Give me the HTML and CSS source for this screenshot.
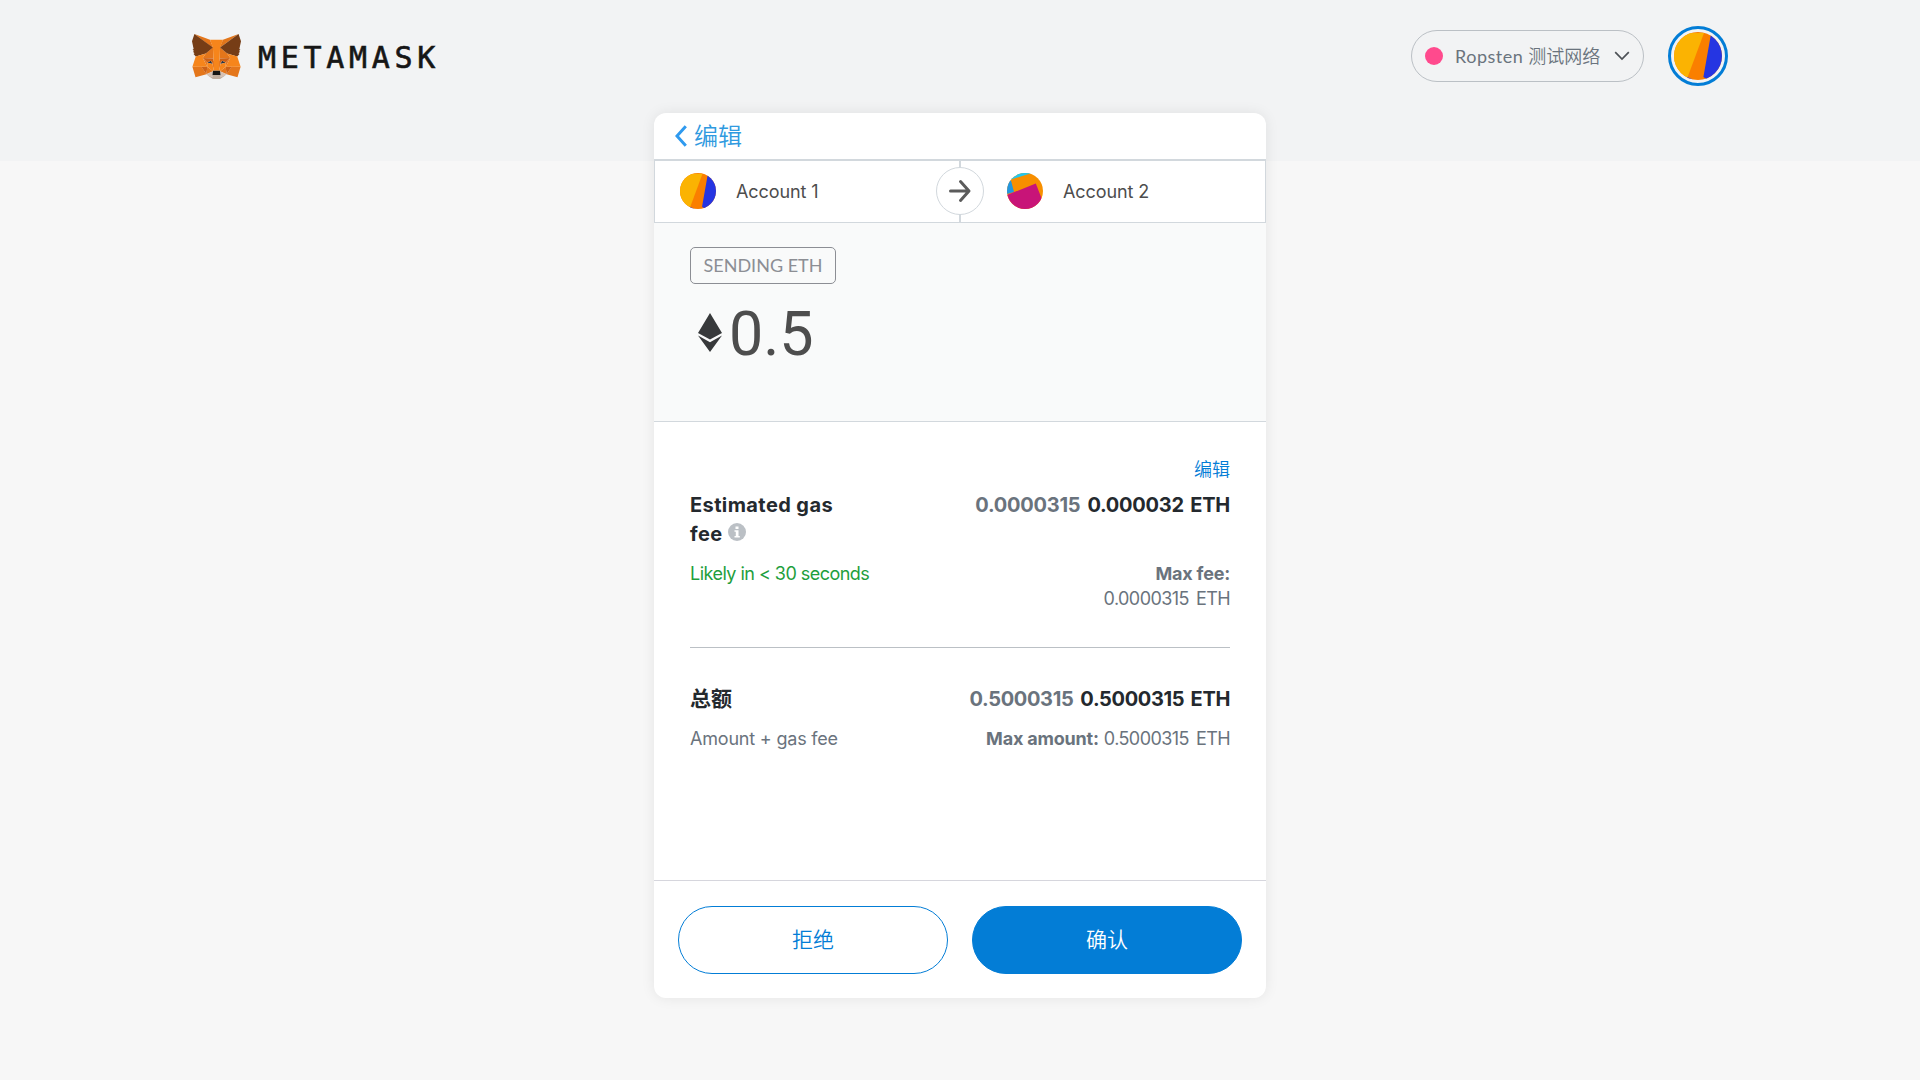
FILE: index.html
```html
<!DOCTYPE html>
<html lang="zh-CN">
<head>
<meta charset="utf-8">
<title>MetaMask</title>
<link rel="stylesheet" href="styles.css">
</head>
<body>
<header class="app-header">
  <div class="brand">
    <svg class="fox" viewBox="31.8 35.5 255 236.4" preserveAspectRatio="none">
      <path fill="#e2761b" d="M274.1 35.5 174.6 109.4 193 65.8z"/>
      <path fill="#e4761b" d="M44.4 35.5 143.1 110.1 125.6 65.8zM238.3 206.8 211.8 247.4 268.5 263 284.8 207.7zM33.9 207.7 50.1 263 106.8 247.4 80.3 206.8zM103.6 138.2 87.8 162.1 144.1 164.6 142.1 104.1zM214.9 138.2 175.9 103.4 174.6 164.6 230.8 162.1zM106.8 247.4 140.6 230.9 111.4 208.1zM177.9 230.9 211.8 247.4 207.1 208.1z"/>
      <path fill="#d7c1b3" d="M211.8 247.4 177.9 230.9 180.6 253 180.3 262.3zM106.8 247.4 138.3 262.3 138.1 253 140.6 230.9z"/>
      <path fill="#233447" d="M138.8 193.5 110.6 185.2 130.5 176.1zM179.7 193.5 188 176.1 208 185.2z"/>
      <path fill="#cd6116" d="M106.8 247.4 111.6 206.8 80.3 207.7zM207 206.8 211.8 247.4 238.3 207.7zM230.8 162.1 174.6 164.6 179.8 193.5 188.1 176.1 208.1 185.2zM110.6 185.2 130.6 176.1 138.8 193.5 144.1 164.6 87.8 162.1z"/>
      <path fill="#e4751f" d="M87.8 162.1 111.4 208.1 110.6 185.2zM208.1 185.2 207.1 208.1 230.8 162.1zM144.1 164.6 138.8 193.5 145.4 227.6 146.9 182.7zM174.6 164.6 171.9 182.6 173.1 227.6 179.8 193.5z"/>
      <path fill="#f6851b" d="M179.8 193.5 173.1 227.6 177.9 230.9 207.1 208.1 208.1 185.2zM110.6 185.2 111.4 208.1 140.6 230.9 145.4 227.6 138.8 193.5z"/>
      <path fill="#c0ad9e" d="M180.3 262.3 180.6 253 178.1 250.8 140.4 250.8 138.1 253 138.3 262.3 106.8 247.4 117.8 256.4 140.1 271.9 178.4 271.9 200.8 256.4 211.8 247.4z"/>
      <path fill="#161616" d="M177.9 230.9 173.1 227.6 145.4 227.6 140.6 230.9 138.1 253 140.4 250.8 178.1 250.8 180.6 253z"/>
      <path fill="#763d16" d="M278.3 114.2 286.8 73.4 274.1 35.5 177.9 106.9 214.9 138.2 267.2 153.5 278.8 140 273.8 136.4 281.8 129.1 275.6 124.3 283.6 118.2zM31.8 73.4 40.3 114.2 34.9 118.2 42.9 124.3 36.8 129.1 44.8 136.4 39.8 140 51.3 153.5 103.6 138.2 140.6 106.9 44.4 35.5z"/>
      <path fill="#f6851b" d="M267.2 153.5 214.9 138.2 230.8 162.1 207.1 208.1 238.3 207.7 284.8 207.7zM103.6 138.2 51.3 153.5 33.9 207.7 80.3 207.7 111.4 208.1 87.8 162.1zM174.6 164.6 177.9 106.9 193.1 65.8 125.6 65.8 140.6 106.9 144.1 164.6 145.3 182.8 145.4 227.6 173.1 227.6 173.3 182.8z"/>
    </svg>
    <span class="wordmark">METAMASK</span>
  </div>
  <div class="header-actions">
    <div class="network">
      <span class="network-dot"></span>
      <span class="network-name"><span class="latin">Ropsten </span>测试网络</span>
      <svg class="network-caret" viewBox="0 0 16 10"><path d="M1.200 1.200 8 8 14.800 1.200" fill="none" stroke="#4d5156" stroke-width="1.700"/></svg>
    </div>
    <div class="account-ring">
      <svg class="avatar-large" viewBox="0 0 48 48"><use href="#jazzicon-one"/></svg>
    </div>
  </div>
</header>

<main class="card">
  <div class="card-nav">
    <svg class="back" viewBox="0 0 12 22"><path d="M10.800 1.300 2 11l8.800 9.700" fill="none" stroke="#2f9aef" stroke-width="3"/></svg>
    <span class="back-label">编辑</span>
  </div>
  <section class="parties">
    <div class="party">
      <svg class="avatar" viewBox="0 0 48 48">
        <defs>
          <clipPath id="round48"><circle cx="24" cy="24" r="24"/></clipPath>
          <g id="jazzicon-one" clip-path="url(#round48)">
            <path fill="#fa7f00" d="M0 0h48v48H0z"/>
            <path fill="#fbb302" d="M0 1.200 30 1 13.500 45.500 0 40z"/>
            <path fill="#2535e2" d="M36.800 3 48 6v42H34l-4.600-3zM13 45l6 2.500-2 .5-6-1z"/>
          </g>
        </defs>
        <use href="#jazzicon-one"/>
      </svg>
      <span class="party-name">Account 1</span>
    </div>
    <div class="divider">
      <span class="arrow"><svg viewBox="0 0 24 24"><path d="M2.500 12h18M12.500 2.500 21 12l-8.500 9.500" fill="none" stroke="#5b5b5b" stroke-width="3" stroke-linecap="round" stroke-linejoin="round"/></svg></span>
    </div>
    <div class="party">
      <svg class="avatar" viewBox="0 0 36 36">
        <clipPath id="round36"><circle cx="18" cy="18" r="18"/></clipPath>
        <g clip-path="url(#round36)">
          <path fill="#f78f00" d="M0 0h36v36H0z"/>
          <path fill="#22c7ee" d="M0 0h30L21 1.200 4 6.500 0 10z"/>
          <path fill="#2196e0" d="M0 7.500 4 7.500 7 19 0 21z"/>
          <path fill="#c81478" d="M0 22 28.800 10.500 36 29v7H0z"/>
        </g>
      </svg>
      <span class="party-name">Account 2</span>
    </div>
  </section>
  <section class="summary">
    <span class="action">SENDING ETH</span>
    <div class="amount">
      <svg class="eth" viewBox="0 0 24 39"><path fill="#37393b" d="M12 0 24 20 12 26.500 0 20zM0 22.600 12 29.300 24 22.600 12 39z"/></svg>
      <span class="amount-value">0.5</span>
    </div>
  </section>
  <section class="details">
    <a class="edit-link">编辑</a>
    <div class="row row-gas">
      <h2 class="title">Estimated gas<br>fee
        <svg class="info" viewBox="0 0 18 18"><circle cx="9" cy="9" r="9" fill="#bbc0c5"/><path fill="#fff" d="M7.500 3.500h3v2.500h-3zM6.500 7.300h4v5.700h1.300v1.500H6.500V13h1.300V8.800H6.500z"/></svg>
      </h2>
      <div class="values"><span class="muted">0.0000315</span><span class="total">0.000032 ETH</span></div>
    </div>
    <div class="row sub-gas">
      <span class="timing">Likely in &lt; 30 seconds</span>
      <div class="max"><b>Max fee:</b><br><span class="number">0.0000315 ETH</span></div>
    </div>
    <div class="row row-total">
      <h2 class="title cjk">总额</h2>
      <div class="values"><span class="muted">0.5000315</span><span class="total">0.5000315 ETH</span></div>
    </div>
    <div class="row sub-total">
      <span class="formula">Amount + gas fee</span>
      <div class="max"><b>Max amount:</b> <span class="number">0.5000315 ETH</span></div>
    </div>
  </section>
  <footer class="actions">
    <button class="btn btn-outline">拒绝</button>
    <button class="btn btn-primary">确认</button>
  </footer>
</main>
</body>
</html>
```
FILE: styles.css
```css
* { box-sizing: border-box; }
body { margin: 0; min-height: 1080px; background: linear-gradient(#f2f3f4 161px, #f7f7f7 161px); font-family: Inter, "Noto Sans CJK SC", sans-serif; color: #24292e; }
.app-header { width: 1536px; height: 113px; margin: 0 auto; padding-top: 26px; display: flex; justify-content: space-between; align-items: flex-start; }
.brand { display: flex; padding-top: 8px; }
.fox { width: 49px; height: 45px; }
.wordmark { margin-left: 17px; font: 30px/48px "DejaVu Sans Mono", monospace; letter-spacing: 4.700px; color: #161616; -webkit-text-stroke: .6px #161616; }
.header-actions { display: flex; align-items: center; gap: 24px; }
.network { width: 233px; height: 52px; padding: 0 13px; display: flex; align-items: center; border: 1px solid #bbc0c5; border-radius: 26px; }
.network-dot { width: 18px; height: 18px; border-radius: 50%; background: #ff4a8d; }
.network-name { margin-left: 12px; font: 18px/24px Lato, "Noto Sans CJK SC DemiLight", "Noto Sans CJK SC Light", "Noto Sans CJK SC", sans-serif; color: #6a737d; white-space: nowrap; }
.latin { letter-spacing: .5px; }
.network-caret { width: 16px; height: 10px; margin-left: auto; }
.account-ring { width: 60px; height: 60px; padding: 3px; border: 3px solid #037dd6; border-radius: 50%; }
.avatar-large { display: block; width: 48px; height: 48px; }

.card { width: 612px; height: 885px; margin: 0 auto; display: flex; flex-direction: column; background: #fff; border-radius: 12px; box-shadow: 0 0 14px rgba(0, 0, 0, .08); overflow: hidden; }
.card > * { flex: none; }
.card-nav { height: 46px; padding-left: 21px; display: flex; align-items: center; gap: 7px; }
.back { width: 12px; height: 22px; }
.back-label { padding-top: 1px; font-size: 24px; font-weight: 350; line-height: 36px; color: #2f9ae0; }
.parties { height: 64px; display: flex; border: 1px solid #d2d8dd; border-top-width: 2px; }
.party { flex: none; width: 281px; display: flex; align-items: center; padding: 0 0 1px 25px; }
.party:last-child { padding-left: 23px; }
.avatar { width: 36px; height: 36px; }
.party-name { margin-left: 20px; padding-top: 1px; font-size: 18px; letter-spacing: -.1px; color: #4d4d4d; }
.divider { width: 48px; padding-bottom: 1px; display: flex; align-items: center; background: linear-gradient(#d2d8dd, #d2d8dd) center / 2px 100% no-repeat; }
.arrow { width: 48px; height: 48px; display: flex; align-items: center; justify-content: center; background: #fff; border: 1px solid #d2d8dd; border-radius: 50%; }
.arrow svg { width: 24px; height: 24px; }

.summary { height: 199px; padding: 24px 36px; background: #f9fafa; border-bottom: 1px solid #d2d8dd; }
.action { display: inline-block; height: 37px; padding: 0 12.500px; border: 1px solid #8c8e94; border-radius: 5px; font: 18px/35px Lato, sans-serif; color: #8c8e94; }
.amount { display: flex; align-items: center; margin-top: 10px; padding-left: 7.500px; }
.eth { width: 24px; height: 39px; }
.amount-value { margin-left: 7.500px; padding-top: 4px; font: 61px/72px Roboto, sans-serif; color: #4d4d4d; }

.details { height: 458px; padding: 34px 36px 0; display: flex; flex-direction: column; }
.edit-link { align-self: flex-end; font-size: 18px; font-weight: 350; line-height: 27px; color: #037dd6; }
.row { display: flex; justify-content: space-between; font-size: 18px; line-height: 25px; color: #6a737d; }
.title { margin: 0; font-size: 20px; line-height: 29px; font-weight: 700; letter-spacing: .4px; color: #24292e; }
.title.cjk { font-size: 21px; letter-spacing: 0; }
.info { width: 18px; height: 18px; }
.row-gas { margin-top: 8px; height: 58px; }
.values { font-size: 20px; line-height: 29px; font-weight: 700; letter-spacing: -.25px; word-spacing: 2px; }
.total { margin-left: 7px; color: #24292e; }
.sub-gas { margin-top: 12px; height: 87px; border-bottom: 1px solid #bbc0c5; }
.timing { color: #1e9e3c; letter-spacing: -.53px; }
.formula, .max b { letter-spacing: -.2px; }
.max { text-align: right; }
.number { letter-spacing: -.57px; word-spacing: 2.500px; }
.row-total { margin-top: 37px; }
.row-total .values { letter-spacing: -.35px; }
.title.cjk { margin-top: -1px; }
.sub-total { margin-top: 12px; }
.actions { height: 118px; padding: 25px 24px 24px; display: flex; gap: 24px; border-top: 1px solid #d6d6dd; }
.btn { width: 270px; height: 68px; border: 1px solid #037dd6; border-radius: 34px; font: 350 21px/30px Inter, "Noto Sans CJK SC", sans-serif; }
.btn-outline { background: #fff; color: #037dd6; }
.btn-primary { background: #037dd6; color: #fff; }
```
